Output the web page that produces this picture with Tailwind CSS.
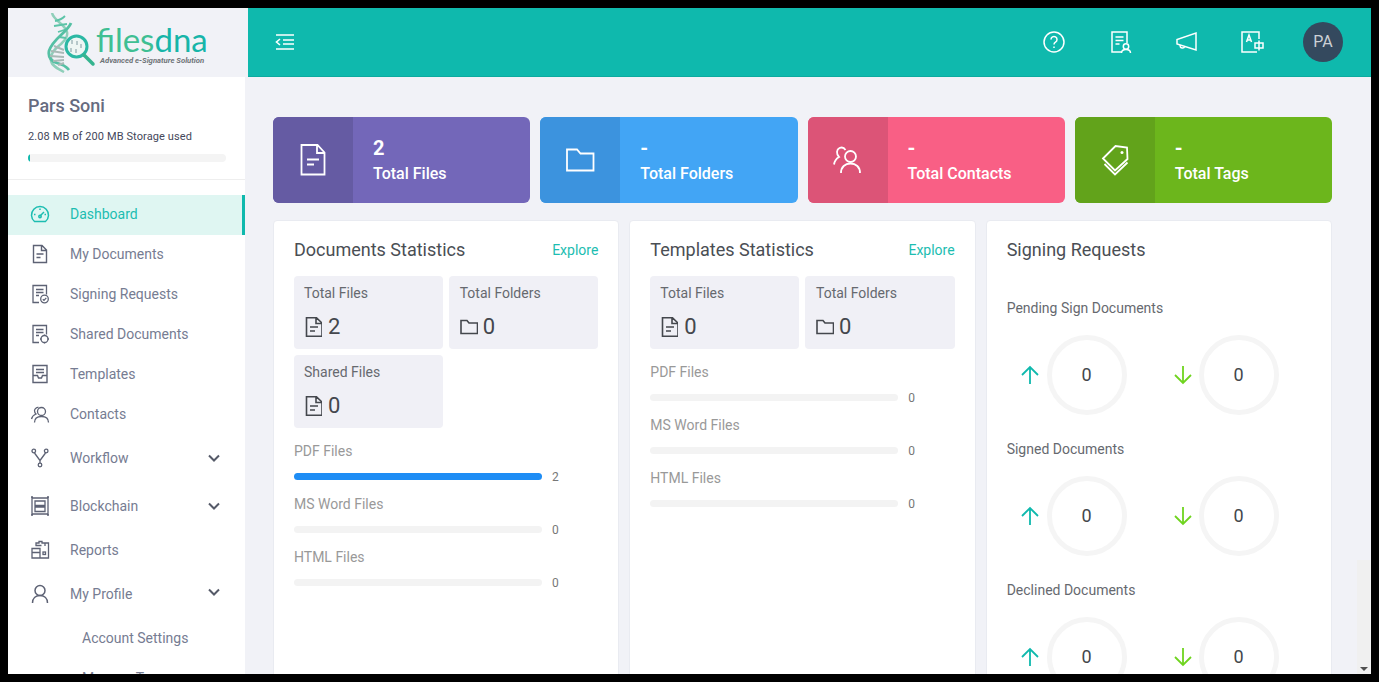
<!DOCTYPE html>
<html lang="en">
<head>
<meta charset="utf-8">
<title>filesdna</title>
<script src="https://cdn.jsdelivr.net/npm/@tailwindcss/browser@4"></script>
</head>
<body class="bg-black font-['Roboto',sans-serif]">
<div class="h-screen w-screen overflow-hidden p-2">
<div class="flex h-full flex-col overflow-hidden bg-[#f1f2f7]">

  <!-- top bar -->
  <header class="flex h-[69px] shrink-0">
    <div class="flex w-[240px] shrink-0 items-center bg-[#f1f2f7] pl-[38px]">
      <svg class="h-[60px] w-[54px] shrink-0" viewBox="0 0 54 60" fill="none">
        <path d="M6 0c2 8 13 11 15 19 1 5-2 8-6 12-6 5-11 9-10 17 1 5 7 8 13 11" stroke="#8fcfba" stroke-width="2.500"/>
        <path d="M9 8c6-1 8-3 10-5M8 13l13-2M12 19l9-3M13 24l7 1" stroke="#5cc4a8" stroke-width="1.800"/>
        <path d="M25 10C21 20 7 25 3 38c-1 6 2 10 8 12 4 1 9 3 12 7" stroke="#55c0a4" stroke-width="2.800"/>
        <path d="M5 38l13 2M4 43l14 1M7 48l11-1M12 52l6-2M8 33l10 4" stroke="#a9b9b6" stroke-width="2"/>
        <circle cx="30.500" cy="33.500" r="10.500" stroke="#2cb8a4" stroke-width="3" fill="#eef6f4"/>
        <path d="M38 42l9 9" stroke="#35b48f" stroke-width="3.500" stroke-linecap="round"/>
        <path d="M26 27v4M31 28v4M35 31v4M25 35v4M30 36v4" stroke="#9fb4b8" stroke-width="1.400"/>
      </svg>
      <div class="-ml-[4px] flex flex-col pt-[5px]">
        <span class="block h-[30px] font-['Lato',sans-serif] text-[33px] leading-[30px] whitespace-nowrap"><span class="inline-block h-[30px] text-[#3fbf93]">files</span><span class="inline-block h-[30px] text-[#17b5a9]">dna</span></span>
        <span class="mt-[2px] ml-[4px] text-[7.7px] leading-[10px] font-bold text-[#6f7478] italic whitespace-nowrap">Advanced e-Signature Solution</span>
      </div>
    </div>
    <div class="flex flex-1 items-center border-b border-[#0cab9f] bg-[#0fb9ad] pr-[28px] pl-[27px]">
      <svg class="mb-[1px] h-5 w-5 text-white" viewBox="0 0 20 20" fill="none" stroke="currentColor" stroke-width="1.600">
        <path d="M1 3h18M8 8h11M8 12h11M1 17h18M5 7l-3.500 3L5 13"/>
      </svg>
      <div class="ml-auto flex items-center gap-[42px]">
        <svg class="h-6 w-6 text-white" viewBox="0 0 24 24" fill="none" stroke="currentColor" stroke-width="1.500">
          <circle cx="12" cy="12" r="10"/>
          <path d="M9 9.500a3 3 0 1 1 4.500 2.600c-1 .6-1.500 1.200-1.500 2.400M12 16.500v1.500"/>
        </svg>
        <svg class="h-6 w-6 text-white" viewBox="0 0 24 24" fill="none" stroke="currentColor" stroke-width="1.500">
          <path d="M13 22H4V2h15v11M7.500 7h8M7.500 10.500h8M7.500 14h4"/>
          <circle cx="18" cy="16.500" r="2.700"/>
          <path d="M13.500 23c0-2.500 2-3.500 4.500-3.500s4.500 1 4.500 3.500"/>
        </svg>
        <svg class="h-6 w-6 text-white" viewBox="0 0 24 24" fill="none" stroke="currentColor" stroke-width="1.500">
          <path d="M22 3v17L3 14V9.500zM6 15.500a2.500 2.500 0 0 0 4.800 1"/>
        </svg>
        <svg class="h-6 w-6 text-white" viewBox="0 0 24 24" fill="none" stroke="currentColor" stroke-width="1.500">
          <path d="M19 9V2H2v20h15"/>
          <path d="M6.500 12l2.500-7 2.500 7M7.500 10h3"/>
          <path d="M15 13h8v5h-8zM19 10.500v10"/>
        </svg>
        <div class="-ml-[3px] flex h-10 w-10 items-center justify-center rounded-full bg-[#34495e] text-base text-[#ccd0d5]">PA</div>
      </div>
    </div>
  </header>

  <div class="flex min-h-0 flex-1">
    <!-- sidebar -->
    <aside class="w-[237px] shrink-0 overflow-hidden bg-white">
      <div class="h-[103px] border-b border-[#eeeeee] pr-5 pl-5">
        <div class="pt-[17px] text-lg leading-[24px] font-medium text-[#666b80]">Pars Soni</div>
        <div class="mt-[12px] text-[11px] leading-[14px] tracking-[0.1px] text-[#44475a]">2.08 MB of 200 MB Storage used</div>
        <div class="mt-[10px] h-2 w-[198px] overflow-hidden rounded-full bg-[#f4f4f4]">
          <div class="h-full w-[2px] bg-[#0fb9ad]"></div>
        </div>
      </div>
      <nav class="pt-[15px] text-sm text-[#767c92]">
        <a class="flex h-10 items-center border-r-[3px] border-[#0fb9ad] bg-[#dff6f2] pb-[2px] pl-[22px] text-[#1cbdb1]">
          <svg class="mr-[20px] h-5 w-5" viewBox="0 0 20 20" fill="none" stroke="currentColor" stroke-width="1.500"><path d="M4.500 17.500a8.500 8.500 0 1 1 11 0z"/><path d="M10 12l4-4M10 4.500v1.500M4 10.500h1.500M14.500 10.500H16"/><circle cx="10" cy="12.500" r="1.200"/></svg>
          Dashboard
        </a>
        <a class="flex h-10 items-center pb-[2px] pl-[22px]">
          <svg class="mr-[20px] h-5 w-5 text-[#5d6274]" viewBox="0 0 20 20" fill="none" stroke="currentColor" stroke-width="1.400"><path d="M3.500 1.500h8.500l4.500 4.500v12.500h-13zM11.500 1.500v5h5M6.500 10h7M6.500 13.500h4"/></svg>
          My Documents
        </a>
        <a class="flex h-10 items-center pb-[2px] pl-[22px]">
          <svg class="mr-[20px] h-5 w-5 text-[#5d6274]" viewBox="0 0 20 20" fill="none" stroke="currentColor" stroke-width="1.300"><path d="M9 18.500H3V1.500h13.500v9M6 5.500h7.500M6 8.500h7.500M6 11.500h3"/><circle cx="14.500" cy="15" r="3.800"/><path d="M12.800 15.200l1.200 1.200 2.300-2.500"/></svg>
          Signing Requests
        </a>
        <a class="flex h-10 items-center pb-[2px] pl-[22px]">
          <svg class="mr-[20px] h-5 w-5 text-[#5d6274]" viewBox="0 0 20 20" fill="none" stroke="currentColor" stroke-width="1.300"><path d="M9 18.500H3V1.500h13.500v9M6 5.500h7.500M6 8.500h7.500M6 11.500h3"/><circle cx="14.500" cy="15" r="3.500"/><path d="M14.500 10.500v1.500M14.500 18v1.500M10 15h1.500M17.500 15H19"/></svg>
          Shared Documents
        </a>
        <a class="flex h-10 items-center pb-[2px] pl-[22px]">
          <svg class="mr-[20px] h-5 w-5 text-[#5d6274]" viewBox="0 0 20 20" fill="none" stroke="currentColor" stroke-width="1.400"><path d="M3 1.500h14v17H3zM6 5.500h8M6 8.500h8M3 11.500h4.500l1 2.500h3l1-2.500H17"/></svg>
          Templates
        </a>
        <a class="flex h-10 items-center pb-[2px] pl-[22px]">
          <svg class="mr-[20px] h-5 w-5 text-[#5d6274]" viewBox="0 0 20 20" fill="none" stroke="currentColor" stroke-width="1.300"><circle cx="11.500" cy="7.500" r="4"/><path d="M4.500 18.500c0-4 3-6 7-6s7 2 7 6M8.500 3.500a3.500 3.500 0 0 0-4 3c0 1.500.5 2.500 1.500 3.500-2.500 1-4 2.500-4.500 5"/></svg>
          Contacts
        </a>
        <a class="flex h-12 items-center pr-[25px] pb-[2px] pl-[22px]">
          <svg class="mr-[20px] h-5 w-5 text-[#5d6274]" viewBox="0 0 20 20" fill="none" stroke="currentColor" stroke-width="1.300"><circle cx="3.800" cy="3" r="1.800"/><circle cx="16.200" cy="3" r="1.800"/><circle cx="10" cy="17" r="1.800"/><path d="M4.500 5l5.500 7.500V15M15.500 5L10 12.500"/></svg>
          Workflow
          <svg class="ml-auto h-3 w-3 text-[#555a68]" viewBox="0 0 12 12" fill="none" stroke="currentColor" stroke-width="2"><path d="M1 3.500l5 5 5-5"/></svg>
        </a>
        <a class="flex h-12 items-center pr-[25px] pb-[2px] pl-[22px]">
          <svg class="mr-[20px] h-5 w-5 text-[#5d6274]" viewBox="0 0 20 20" fill="none" stroke="currentColor" stroke-width="1.300"><path d="M2 2h16v16H2zM5 5h10v4.500H5zM5 11h10v4.500H5zM1 1h2M17 1h2M1 19h2M17 19h2"/></svg>
          Blockchain
          <svg class="ml-auto h-3 w-3 text-[#555a68]" viewBox="0 0 12 12" fill="none" stroke="currentColor" stroke-width="2"><path d="M1 3.500l5 5 5-5"/></svg>
        </a>
        <a class="flex h-10 items-center pb-[2px] pl-[22px]">
          <svg class="mr-[20px] h-5 w-5 text-[#5d6274]" viewBox="0 0 20 20" fill="none" stroke="currentColor" stroke-width="1.300"><path d="M6 6V3h3V1.500h3V3h3v3M15 3h3.500v15H10M2 8.500h8V18H2zM2 12.500h8M5.500 5.500h6"/><rect x="13" y="12" width="2.500" height="2.500"/></svg>
          Reports
        </a>
        <a class="flex h-12 items-center pr-[25px] pb-[2px] pl-[22px]">
          <svg class="mr-[20px] h-5 w-5 text-[#5d6274]" viewBox="0 0 20 20" fill="none" stroke="currentColor" stroke-width="1.500"><circle cx="10" cy="6.500" r="5"/><path d="M2.500 19c0-4.500 3-7.500 7.500-7.500s7.500 3 7.500 7.500"/></svg>
          My Profile
          <svg class="mb-1 ml-auto h-3 w-3 text-[#555a68]" viewBox="0 0 12 12" fill="none" stroke="currentColor" stroke-width="2"><path d="M1 3.500l5 5 5-5"/></svg>
        </a>
        <a class="flex h-10 items-center pb-[2px] pl-[74px]">Account Settings</a>
        <a class="flex h-10 items-center pb-[2px] pl-[74px]">Manage Tags</a>
      </nav>
    </aside>

    <!-- content -->
    <main class="flex min-w-0 flex-1 overflow-hidden">
      <div class="min-w-0 flex-1 pt-10 pr-[25px] pl-[28px]">
        <section class="grid grid-cols-4 gap-[10px]">
          <div class="flex h-[86px] overflow-hidden rounded-md bg-[#7367b9] text-white">
            <div class="flex w-20 shrink-0 items-center justify-center bg-[#655ba3]">
              <svg class="h-8 w-8" viewBox="0 0 32 32" fill="none" stroke="currentColor" stroke-width="1.800"><path d="M4.500 1h16l7 7.500V30.500h-23zM20 1v8h7.500M10 15.500h12M10 20.500h7"/></svg>
            </div>
            <div class="pt-[19px] pl-5"><div class="text-xl leading-[24px] font-bold">2</div><div class="mt-[2px] text-base leading-[24px] font-medium">Total Files</div></div>
          </div>
          <div class="flex h-[86px] overflow-hidden rounded-md bg-[#42a5f5] text-white">
            <div class="flex w-20 shrink-0 items-center justify-center bg-[#3c93de]">
              <svg class="h-8 w-8" viewBox="0 0 32 32" fill="none" stroke="currentColor" stroke-width="1.800"><path d="M3 5.500h10l3.500 4H29.500v17H3z"/></svg>
            </div>
            <div class="pt-[19px] pl-5"><div class="text-xl leading-[24px] font-bold">-</div><div class="mt-[2px] text-base leading-[24px] font-medium">Total Folders</div></div>
          </div>
          <div class="flex h-[86px] overflow-hidden rounded-md bg-[#f95f85] text-white">
            <div class="flex w-20 shrink-0 items-center justify-center bg-[#dc5477]">
              <svg class="h-8 w-8" viewBox="0 0 32 32" fill="none" stroke="currentColor" stroke-width="1.800"><circle cx="18.500" cy="12.500" r="5.500"/><path d="M9 29c0-6 4-9.500 9.500-9.500S28 23 28 29M13.500 6a4.800 4.800 0 0 0-6-2c-3 1.500-3.500 6-.5 9-2.500 1.500-4.500 4-5 7.500"/></svg>
            </div>
            <div class="pt-[19px] pl-5"><div class="text-xl leading-[24px] font-bold">-</div><div class="mt-[2px] text-base leading-[24px] font-medium">Total Contacts</div></div>
          </div>
          <div class="flex h-[86px] overflow-hidden rounded-md bg-[#6cb61c] text-white">
            <div class="flex w-20 shrink-0 items-center justify-center bg-[#62a31b]">
              <svg class="h-8 w-8" viewBox="0 0 32 32" fill="none" stroke="currentColor" stroke-width="1.800"><path d="M4 14.500L16.500 2l11.500 1.500.5 11.500L16 26.500zM5.500 20L16 30.500 28.500 18.500"/><circle cx="23" cy="8.500" r="1.500" fill="currentColor" stroke="none"/></svg>
            </div>
            <div class="pt-[19px] pl-5"><div class="text-xl leading-[24px] font-bold">-</div><div class="mt-[2px] text-base leading-[24px] font-medium">Total Tags</div></div>
          </div>
        </section>

        <section class="mt-[17px] grid grid-cols-3 gap-[10px]">
          <!-- documents -->
          <div class="h-[600px] rounded-sm border border-[#e9ebf1] bg-white px-5 pt-[17px]">
            <div class="flex items-center justify-between"><h2 class="text-lg leading-[24px] text-[#4a4e54]">Documents Statistics</h2><a class="text-sm text-[#1cbdb1]">Explore</a></div>
            <div class="mt-[14px] grid grid-cols-2 gap-[6px]">
              <div class="h-[73px] rounded-sm bg-[#f0f0f6] pt-[8px] pl-[10px]">
                <div class="text-sm leading-[18px] text-[#66696f]">Total Files</div>
                <div class="mt-[12px] flex items-center gap-[6px] text-[22px] leading-[26px] text-[#44474d]">
                  <svg class="h-[20px] w-[18px]" viewBox="0 0 18 20" fill="none" stroke="currentColor" stroke-width="1.600"><path d="M2.500 .8h10L18 6v13.200H2.500zM12 .8v5.700h6M6 10h8M6 14h5"/></svg>2
                </div>
              </div>
              <div class="h-[73px] rounded-sm bg-[#f0f0f6] pt-[8px] pl-[10.5px]">
                <div class="text-sm leading-[18px] text-[#66696f]">Total Folders</div>
                <div class="mt-[12px] flex items-center gap-[5px] text-[22px] leading-[26px] text-[#44474d]">
                  <svg class="h-[20px] w-[18px]" viewBox="0 0 18 20" fill="none" stroke="currentColor" stroke-width="1.600"><path d="M1 3.500h6l2 2.500h8.500v10.500H1z"/></svg>0
                </div>
              </div>
              <div class="h-[73px] rounded-sm bg-[#f0f0f6] pt-[8px] pl-[10px]">
                <div class="text-sm leading-[18px] text-[#66696f]">Shared Files</div>
                <div class="mt-[12px] flex items-center gap-[6px] text-[22px] leading-[26px] text-[#44474d]">
                  <svg class="h-[20px] w-[18px]" viewBox="0 0 18 20" fill="none" stroke="currentColor" stroke-width="1.600"><path d="M2.500 .8h10L18 6v13.200H2.500zM12 .8v5.700h6M6 10h8M6 14h5"/></svg>0
                </div>
              </div>
            </div>
            <div class="mt-[14px] flex flex-col gap-[15px]">
              <div>
                <div class="text-sm leading-[18px] text-[#999999]">PDF Files</div>
                <div class="mt-[13px] flex h-[7px] items-center gap-[10px]"><div class="h-[7px] w-[248px] rounded-full bg-[#1e8df5]"></div><span class="text-xs text-[#777777]">2</span></div>
              </div>
              <div>
                <div class="text-sm leading-[18px] text-[#999999]">MS Word Files</div>
                <div class="mt-[13px] flex h-[7px] items-center gap-[10px]"><div class="h-[7px] w-[248px] rounded-full bg-[#f3f3f3]"></div><span class="text-xs text-[#777777]">0</span></div>
              </div>
              <div>
                <div class="text-sm leading-[18px] text-[#999999]">HTML Files</div>
                <div class="mt-[13px] flex h-[7px] items-center gap-[10px]"><div class="h-[7px] w-[248px] rounded-full bg-[#f3f3f3]"></div><span class="text-xs text-[#777777]">0</span></div>
              </div>
            </div>
          </div>

          <!-- templates -->
          <div class="h-[600px] rounded-sm border border-[#e9ebf1] bg-white px-5 pt-[17px]">
            <div class="flex items-center justify-between"><h2 class="text-lg leading-[24px] text-[#4a4e54]">Templates Statistics</h2><a class="text-sm text-[#1cbdb1]">Explore</a></div>
            <div class="mt-[14px] grid grid-cols-2 gap-[6px]">
              <div class="h-[73px] rounded-sm bg-[#f0f0f6] pt-[8px] pl-[10px]">
                <div class="text-sm leading-[18px] text-[#66696f]">Total Files</div>
                <div class="mt-[12px] flex items-center gap-[6px] text-[22px] leading-[26px] text-[#44474d]">
                  <svg class="h-[20px] w-[18px]" viewBox="0 0 18 20" fill="none" stroke="currentColor" stroke-width="1.600"><path d="M2.500 .8h10L18 6v13.200H2.500zM12 .8v5.700h6M6 10h8M6 14h5"/></svg>0
                </div>
              </div>
              <div class="h-[73px] rounded-sm bg-[#f0f0f6] pt-[8px] pl-[10.5px]">
                <div class="text-sm leading-[18px] text-[#66696f]">Total Folders</div>
                <div class="mt-[12px] flex items-center gap-[5px] text-[22px] leading-[26px] text-[#44474d]">
                  <svg class="h-[20px] w-[18px]" viewBox="0 0 18 20" fill="none" stroke="currentColor" stroke-width="1.600"><path d="M1 3.500h6l2 2.500h8.500v10.500H1z"/></svg>0
                </div>
              </div>
            </div>
            <div class="mt-[14px] flex flex-col gap-[15px]">
              <div>
                <div class="text-sm leading-[18px] text-[#999999]">PDF Files</div>
                <div class="mt-[13px] flex h-[7px] items-center gap-[10px]"><div class="h-[7px] w-[248px] rounded-full bg-[#f3f3f3]"></div><span class="text-xs text-[#777777]">0</span></div>
              </div>
              <div>
                <div class="text-sm leading-[18px] text-[#999999]">MS Word Files</div>
                <div class="mt-[13px] flex h-[7px] items-center gap-[10px]"><div class="h-[7px] w-[248px] rounded-full bg-[#f3f3f3]"></div><span class="text-xs text-[#777777]">0</span></div>
              </div>
              <div>
                <div class="text-sm leading-[18px] text-[#999999]">HTML Files</div>
                <div class="mt-[13px] flex h-[7px] items-center gap-[10px]"><div class="h-[7px] w-[248px] rounded-full bg-[#f3f3f3]"></div><span class="text-xs text-[#777777]">0</span></div>
              </div>
            </div>
          </div>

          <!-- signing requests -->
          <div class="h-[600px] rounded-sm border border-[#e9ebf1] bg-white px-5 pt-[17px]">
            <h2 class="text-lg leading-[24px] text-[#4a4e54]">Signing Requests</h2>
            <div class="mt-[37px] text-sm leading-[18px] text-[#66696f]">Pending Sign Documents</div>
            <div class="mt-[18px] flex h-[80px] items-center pl-[13px] text-[#44474c]">
              <svg class="h-5 w-5 text-[#0fb9ad]" viewBox="0 0 20 20" fill="none" stroke="currentColor" stroke-width="1.800"><path d="M10 19V2M2 10l8-8 8 8"/></svg>
              <div class="ml-[7px] flex h-20 w-20 items-center justify-center rounded-full border-[5px] border-[#f5f5f5] text-lg">0</div>
              <svg class="ml-[46px] h-5 w-5 text-[#6fd41f]" viewBox="0 0 20 20" fill="none" stroke="currentColor" stroke-width="1.800"><path d="M10 1v17M2 10l8 8 8-8"/></svg>
              <div class="ml-[6px] flex h-20 w-20 items-center justify-center rounded-full border-[5px] border-[#f5f5f5] text-lg">0</div>
            </div>
            <div class="mt-[25px] text-sm leading-[18px] text-[#66696f]">Signed Documents</div>
            <div class="mt-[18px] flex h-[80px] items-center pl-[13px] text-[#44474c]">
              <svg class="h-5 w-5 text-[#0fb9ad]" viewBox="0 0 20 20" fill="none" stroke="currentColor" stroke-width="1.800"><path d="M10 19V2M2 10l8-8 8 8"/></svg>
              <div class="ml-[7px] flex h-20 w-20 items-center justify-center rounded-full border-[5px] border-[#f5f5f5] text-lg">0</div>
              <svg class="ml-[46px] h-5 w-5 text-[#6fd41f]" viewBox="0 0 20 20" fill="none" stroke="currentColor" stroke-width="1.800"><path d="M10 1v17M2 10l8 8 8-8"/></svg>
              <div class="ml-[6px] flex h-20 w-20 items-center justify-center rounded-full border-[5px] border-[#f5f5f5] text-lg">0</div>
            </div>
            <div class="mt-[25px] text-sm leading-[18px] text-[#66696f]">Declined Documents</div>
            <div class="mt-[18px] flex h-[80px] items-center pl-[13px] text-[#44474c]">
              <svg class="h-5 w-5 text-[#0fb9ad]" viewBox="0 0 20 20" fill="none" stroke="currentColor" stroke-width="1.800"><path d="M10 19V2M2 10l8-8 8 8"/></svg>
              <div class="ml-[7px] flex h-20 w-20 items-center justify-center rounded-full border-[5px] border-[#f5f5f5] text-lg">0</div>
              <svg class="ml-[46px] h-5 w-5 text-[#6fd41f]" viewBox="0 0 20 20" fill="none" stroke="currentColor" stroke-width="1.800"><path d="M10 1v17M2 10l8 8 8-8"/></svg>
              <div class="ml-[6px] flex h-20 w-20 items-center justify-center rounded-full border-[5px] border-[#f5f5f5] text-lg">0</div>
            </div>
          </div>
        </section>
      </div>
      <!-- page scrollbar -->
      <div class="flex w-[14px] shrink-0 flex-col justify-end">
        <div class="flex h-[114px] items-end justify-center bg-[#f0f0f0] pb-[3px]">
          <div class="h-0 w-0 border-x-[4px] border-t-[4px] border-x-transparent border-t-[#505050]"></div>
        </div>
      </div>
    </main>
  </div>
</div>
</div>
</body>
</html>
